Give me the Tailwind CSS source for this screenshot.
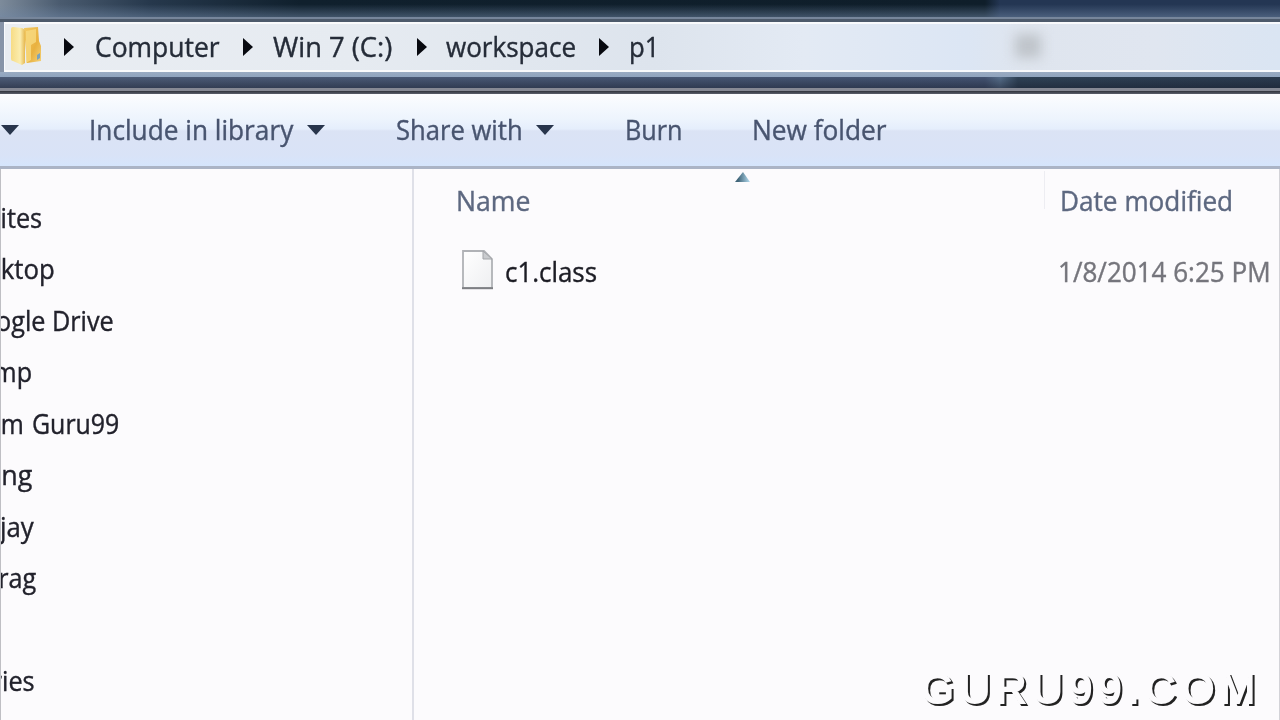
<!DOCTYPE html>
<html lang="en">
<head>
<meta charset="utf-8">
<title>p1</title>
<script src="https://cdn.jsdelivr.net/npm/@tailwindcss/browser@4"></script>
</head>
<body class="w-[1280px] h-[720px] overflow-hidden">
<div class="relative flex flex-col w-[1280px] h-[720px] overflow-hidden bg-[#fcfbfd] font-['Open_Sans','Noto_Sans',sans-serif] text-[28px] leading-[48px] whitespace-nowrap [-webkit-text-stroke:0.4px]">

  <!-- window frame and address bar -->
  <header class="relative flex flex-col shrink-0 h-[94px]">
    <div class="h-[17px] shrink-0 bg-[linear-gradient(90deg,#7d8b9b_0,#4a5b6f_60px,#26384c_150px,#10202d_300px,#0f1e2a_985px,#243653_1000px,#243653_100%)]">
      <div class="h-full bg-[linear-gradient(180deg,transparent_25%,rgba(112,135,165,0.5)_100%)]"></div>
    </div>
    <div class="h-[2px] shrink-0 bg-[#77869b]"></div>
    <div class="h-[3px] shrink-0 bg-[#4d5a6b]"></div>
    <div class="flex h-[50px] shrink-0 bg-[#8794a8] pl-[4px]">
      <div class="flex items-center grow border-t-2 border-b-2 border-l border-white/80 pb-[2px] bg-[linear-gradient(90deg,#e9edf2_0,#e6ebf1_350px,#dde4ed_650px,#e3eaf4_800px,#dce6f4_960px,#dfe5ee_1020px,#e0e6f0_1150px,#dae5f3_100%)]">
        <svg class="ml-[4px] w-[34px] h-[42px] shrink-0" viewBox="0 0 34 42">
          <defs>
            <linearGradient id="a" x1="0" x2="1"><stop offset="0" stop-color="#f7dc85"/><stop offset=".65" stop-color="#fbedb0"/><stop offset="1" stop-color="#e6b850"/></linearGradient>
            <linearGradient id="b" x1="0" x2="1" y1="0" y2="1"><stop offset="0" stop-color="#f3ca64"/><stop offset=".6" stop-color="#e9b13f"/><stop offset="1" stop-color="#f3d27b"/></linearGradient>
          </defs>
          <path d="M15 3L29 2L30 16L32 21V36L18 38Z" fill="url(#b)"/>
          <path d="M17 6L27 4V17L22 20V35L17 38Z" fill="#f7d980" opacity=".8"/>
          <path d="M2 4Q2 2 4 2L13 3Q16 4 16 7V38L13 40L4 36Q2 36 2 34Z" fill="url(#a)"/>
          <path d="M28 30L31 28V33L28 35Z" fill="#7ba3bb"/>
        </svg>
        <svg class="ml-[20px] mt-[2px] w-[12px] h-[18px] shrink-0" viewBox="0 0 12 18"><path d="M1 0L11 9L1 18Z" fill="#080a10"/></svg>
        <div class="ml-[20px] w-[125px] text-[#252c38]"><span class="inline-block origin-left scale-x-[0.945]">Computer</span></div>
        <svg class="ml-[22px] mt-[2px] w-[12px] h-[18px] shrink-0" viewBox="0 0 12 18"><path d="M1 0L11 9L1 18Z" fill="#080a10"/></svg>
        <div class="ml-[19px] w-[121px] text-[#252c38]"><span class="inline-block origin-left scale-x-[0.976]">Win 7 (C:)</span></div>
        <svg class="ml-[22px] mt-[2px] w-[12px] h-[18px] shrink-0" viewBox="0 0 12 18"><path d="M1 0L11 9L1 18Z" fill="#080a10"/></svg>
        <div class="ml-[18px] w-[131px] text-[#252c38]"><span class="inline-block origin-left scale-x-[0.93]">workspace</span></div>
        <svg class="ml-[21px] mt-[2px] w-[12px] h-[18px] shrink-0" viewBox="0 0 12 18"><path d="M1 0L11 9L1 18Z" fill="#080a10"/></svg>
        <div class="ml-[19px] w-[28px] text-[#252c38]"><span class="inline-block origin-left scale-x-[0.92]">p1</span></div>
        <div class="ml-[358px] w-[26px] h-[24px] bg-[#bfc4ca] blur-[6px]"></div>
      </div>
    </div>
    <div class="h-[5px] shrink-0 bg-[linear-gradient(180deg,#9aabc2,#8fa4be)]"></div>
    <div class="h-[11px] shrink-0 bg-[linear-gradient(90deg,#4e5d78_0,#435371_985px,#566e8a_1000px,#2f4256_1018px,#2b3b4f_100%)]">
      <div class="h-full bg-[linear-gradient(180deg,transparent,rgba(20,25,40,0.45))]"></div>
    </div>
    <div class="h-[3px] shrink-0 bg-[#868994]"></div>
    <div class="h-[3px] shrink-0 bg-[linear-gradient(180deg,#30323b,#5b606c)]"></div>
  </header>

  <!-- command bar -->
  <nav class="flex items-center shrink-0 h-[75px] pb-[3px] border-b-3 border-[#abb4c6] text-[#48546f] bg-[linear-gradient(180deg,#fcfdff_0,#edf4fd_25px,#e5eefc_35px,#dbe3f5_37px,#d9e3f7_62px,#d5e5fc_100%)]">
    <svg class="ml-[1px] mt-[2px] w-[18px] h-[12px] shrink-0" viewBox="0 0 18 12"><path d="M0 1H18L9 11Z" fill="#28354c"/></svg>
    <div class="ml-[70px] w-[205px]"><span class="inline-block origin-left scale-x-[0.937]">Include in library</span></div>
    <svg class="ml-[13px] mt-[2px] w-[18px] h-[12px] shrink-0" viewBox="0 0 18 12"><path d="M0 1H18L9 11Z" fill="#28354c"/></svg>
    <div class="ml-[71px] w-[126px]"><span class="inline-block origin-left scale-x-[0.915]">Share with</span></div>
    <svg class="ml-[14px] mt-[2px] w-[18px] h-[12px] shrink-0" viewBox="0 0 18 12"><path d="M0 1H18L9 11Z" fill="#28354c"/></svg>
    <div class="ml-[71px] w-[58px]"><span class="inline-block origin-left scale-x-[0.9]">Burn</span></div>
    <div class="ml-[69px] w-[135px]"><span class="inline-block origin-left scale-x-[0.938]">New folder</span></div>
  </nav>

  <div class="flex grow">
    <!-- navigation pane -->
    <aside class="w-[412px] shrink-0 pt-[23px] border-l border-[#bfbfc4] leading-[51.45px] text-[#22222c] overflow-hidden">
      <div class="flex justify-end w-[41px] h-[51.45px]"><span class="origin-right scale-x-[0.9]">ites</span></div>
      <div class="flex justify-end w-[54px] h-[51.45px]"><span class="origin-right scale-x-[0.92]">ktop</span></div>
      <div class="flex justify-end w-[113px] h-[51.45px]"><span class="origin-right scale-x-[0.9]">ogle Drive</span></div>
      <div class="flex justify-end w-[31px] h-[51.45px]"><span class="origin-right scale-x-[0.9]">mp</span></div>
      <div class="flex justify-end w-[118px] h-[51.45px] [word-spacing:2px]"><span class="origin-right scale-x-[0.89]">m Guru99</span></div>
      <div class="flex justify-end w-[31px] h-[51.45px]"><span class="origin-right scale-x-[0.96]">ng</span></div>
      <div class="flex justify-end w-[33px] h-[51.45px]"><span class="origin-right scale-x-[0.92]">jay</span></div>
      <div class="flex justify-end w-[35px] h-[51.45px]"><span class="origin-right scale-x-[0.9]">rag</span></div>
      <div class="flex justify-end w-[34px] h-[51.45px] mt-[51.45px]"><span class="origin-right scale-x-[0.9]">ries</span></div>
    </aside>
    <div class="w-[2px] shrink-0 bg-[#dfe0e8]"></div>

    <!-- file list -->
    <main class="relative grow border-r border-[#d3d3d8]">
      <svg class="absolute left-[320px] top-[2px] w-[17px] h-[12px]" viewBox="0 0 17 12"><defs><linearGradient id="c" x1="0" x2="1"><stop offset=".2" stop-color="#3f6478"/><stop offset="1" stop-color="#b5dcf0"/></linearGradient></defs><path d="M1 11L9 1L16 11Z" fill="url(#c)"/></svg>
      <div class="flex h-[62px] items-center text-[#5d6880]">
        <div class="ml-[42px] w-[75px]"><span class="inline-block origin-left scale-x-[0.95]">Name</span></div>
        <div class="ml-[513px] mb-[20px] w-[1px] h-[38px] bg-[#ededf2]"></div>
        <div class="ml-[15px] w-[174px]"><span class="inline-block origin-left scale-x-[0.935]">Date modified</span></div>
      </div>
      <div class="flex h-[80px] items-center">
        <svg class="ml-[47px] mb-[2px] w-[34px] h-[42px] shrink-0" viewBox="0 0 34 42"><defs><linearGradient id="d" x1="0" x2="1" y1="0" y2="1"><stop offset="0" stop-color="#fff"/><stop offset="1" stop-color="#eeeff1"/></linearGradient></defs><path d="M2 2H23L31 10V39H2Z" fill="url(#d)" stroke="#b0b2b6" stroke-width="1.8"/><path d="M22 2V10H31Z" fill="#c9cbce" stroke="#a3a5a9"/><path d="M1 39.2H32" stroke="#7d7f83" stroke-width="2"/></svg>
        <div class="ml-[10px] w-[92px] text-[#1c1c24]"><span class="inline-block origin-left scale-x-[0.925]">c1.class</span></div>
        <div class="ml-[461px] w-[213px] text-[#75757c]"><span class="inline-block origin-left scale-x-[0.93]">1/8/2014 6:25 PM</span></div>
      </div>
    </main>
  </div>

  <!-- embossed watermark -->
  <div class="absolute left-[921px] top-[665px] font-['Liberation_Sans',Arial,sans-serif] text-[42px] leading-[47px] tracking-[6px] text-[#fcfbfd] [-webkit-text-stroke:2px_#fcfbfd] [filter:drop-shadow(2px_2px_0.5px_#222)]">GURU99.COM</div>
</div>
</body>
</html>
